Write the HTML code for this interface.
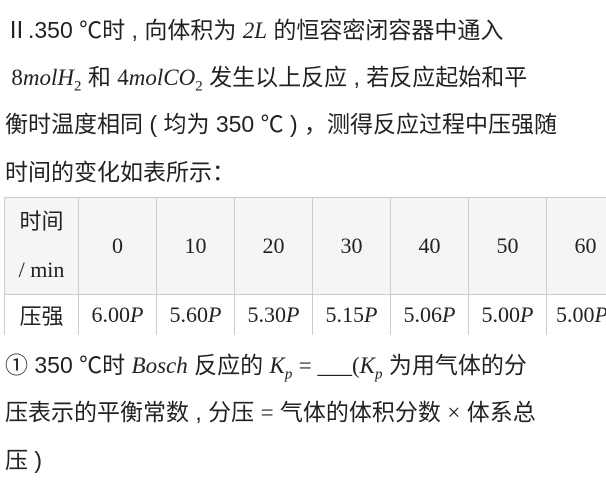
<html><head><style>
body{margin:0;width:606px;height:480px;overflow:hidden;background:#fff;font-family:"Liberation Sans","Noto Sans CJK SC",sans-serif;font-size:23px;color:#222;position:relative}
.l{position:absolute;left:5px;white-space:nowrap;line-height:30px}
.m{font-family:"Liberation Serif",serif;font-style:italic}
.n{font-family:"Liberation Serif",serif}
table{position:absolute;left:4px;top:197px;border-collapse:collapse;table-layout:fixed;width:620px;font-family:"Liberation Serif",serif;font-size:22px}
td{border:1px solid #ccc;text-align:center;padding:0;white-space:nowrap;overflow:hidden}
tr.h td{background:#f5f5f5;height:95px}
tr.b td{height:40px;border-bottom:none}
</style></head><body>
<div class="l" style="top:15px">Ⅱ.350 ℃时 , 向体积为 <span class="m">2L</span> 的恒容密闭容器中通入</div>
<div class="l" style="top:62px">&nbsp;<span class="n">8</span><span class="m">molH</span><sub class="n" style="font-size:15px">2</sub> 和 <span class="n">4</span><span class="m">molCO</span><sub class="n" style="font-size:15px">2</sub> 发生以上反应 , 若反应起始和平</div>
<div class="l" style="top:109px">衡时温度相同 ( 均为 350 ℃ ) ，测得反应过程中压强随</div>
<div class="l" style="top:157px">时间的变化如表所示：</div>
<table>
<colgroup><col style="width:74px"><col style="width:78px"><col style="width:78px"><col style="width:78px"><col style="width:78px"><col style="width:78px"><col style="width:78px"><col style="width:78px"></colgroup>
<tr class="h"><td style="font-family:'Liberation Sans','Noto Sans CJK SC',sans-serif;line-height:48px">时间<br><span class="n">/ min</span></td><td>0</td><td>10</td><td>20</td><td>30</td><td>40</td><td>50</td><td>60</td></tr>
<tr class="b"><td style="font-family:'Liberation Sans','Noto Sans CJK SC',sans-serif">压强</td><td>6.00<i>P</i></td><td>5.60<i>P</i></td><td>5.30<i>P</i></td><td>5.15<i>P</i></td><td>5.06<i>P</i></td><td>5.00<i>P</i></td><td style="text-align:left;padding-left:9px">5.00<i>P</i></td></tr>
</table>
<div class="l" style="top:350px">① 350 ℃时 <span class="m">Bosch</span> 反应的 <span class="m">K<sub style="font-size:15px">p</sub></span> <span class="n">= ___(</span><span class="m">K<sub style="font-size:15px">p</sub></span> 为用气体的分</div>
<div class="l" style="top:397px">压表示的平衡常数 , 分压 <span class="n">=</span> 气体的体积分数 <span class="n">×</span> 体系总</div>
<div class="l" style="top:445px">压 )</div>
</body></html>
